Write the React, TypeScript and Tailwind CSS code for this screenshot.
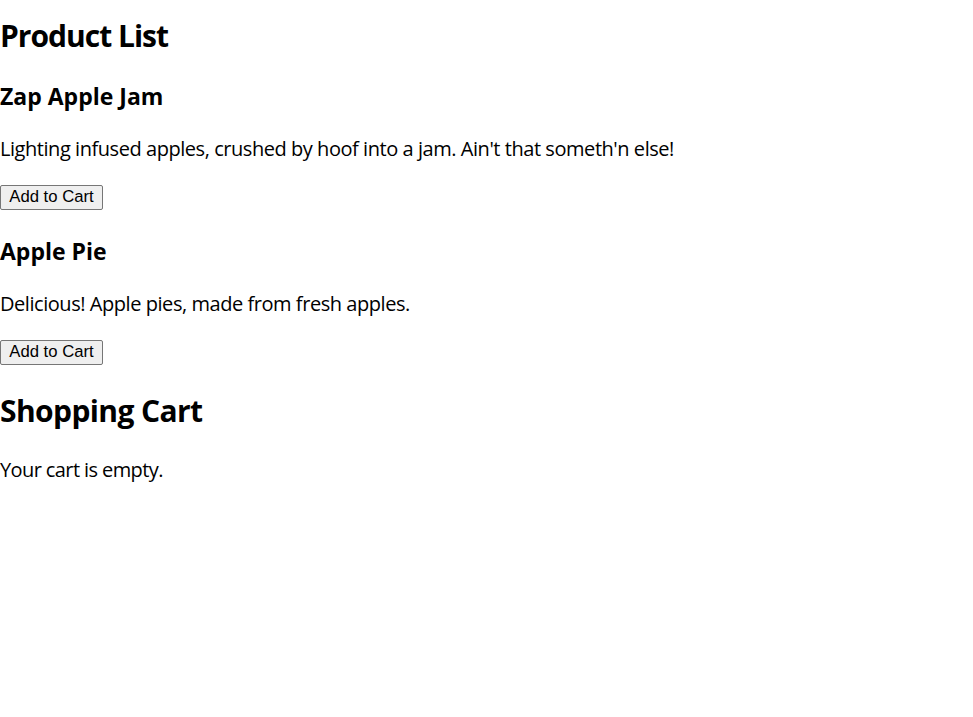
import { useState } from "react";

type Product = {
  id: number;
  name: string;
  description: string;
};

const products: Product[] = [
  {
    id: 1,
    name: "Zap Apple Jam",
    description: "Lighting infused apples, crushed by hoof into a jam. Ain't that someth'n else!",
  },
  {
    id: 2,
    name: "Apple Pie",
    description: "Delicious! Apple pies, made from fresh apples.",
  },
];

const App = () => {
  const [cart, setCart] = useState<Product[]>([]);

  return (
    <div className="bg-white text-black font-['Open_Sans',sans-serif] min-h-[717px] flow-root">
      <h2 className="mt-[16px] mb-[-1px] text-[30px] leading-[40px] font-bold tracking-[-1px]">Product List</h2>

      {products.map((product) => (
        <div key={product.id}>
          <h3 className="mt-[26px] text-[23px] leading-[31px] font-bold">{product.name}</h3>
          <p className="mt-[23px] text-[20px] leading-[27px] tracking-[-0.45px]">{product.description}</p>
          <button
            onClick={() => setCart([...cart, product])}
            className="mt-[23px] h-[25px] w-[103px] bg-[#efefef] border border-[#767676] rounded-[2px] text-[16.7px] leading-none font-['Liberation_Sans',Arial,sans-serif] text-black"
          >
            Add to Cart
          </button>
        </div>
      ))}

      <h2 className="mt-[26px] text-[30px] leading-[40px] font-bold tracking-[-0.6px]">Shopping Cart</h2>
      {cart.length === 0 ? (
        <p className="mt-[25px] text-[20px] leading-[27px] tracking-[-0.6px]">Your cart is empty.</p>
      ) : (
        <ul className="mt-[25px] text-[20px] leading-[27px] tracking-[-0.45px]">
          {cart.map((item, i) => (
            <li key={i}>{item.name}</li>
          ))}
        </ul>
      )}
    </div>
  );
};

export default App;
